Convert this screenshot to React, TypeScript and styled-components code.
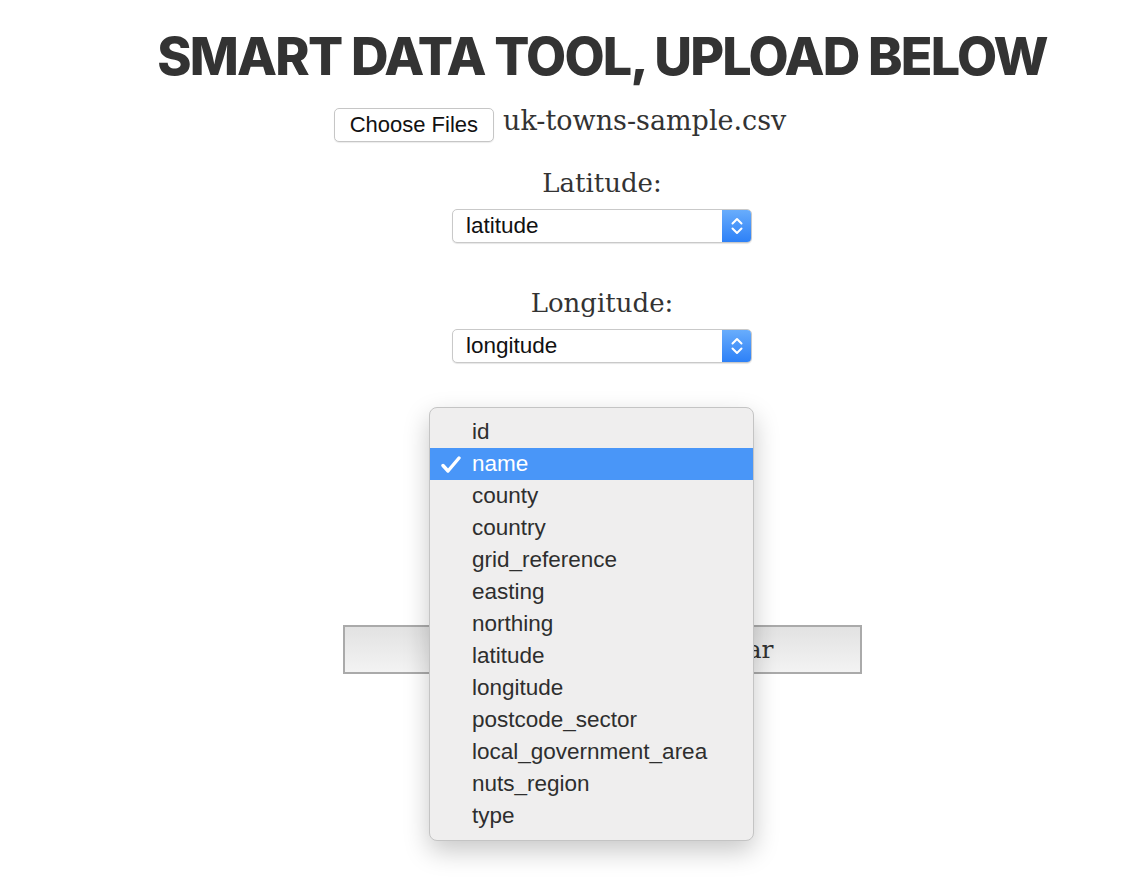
import React from 'react'
import styled, { createGlobalStyle } from 'styled-components'

const GlobalStyle = createGlobalStyle`
  html, body {
    margin: 0;
    padding: 0;
    background: #fff;
  }
  body {
    font-family: "DejaVu Serif", serif;
    color: #333;
  }
`

const Page = styled.main`
  display: flex;
  flex-direction: column;
  align-items: center;
  min-height: 882px;
  padding: 28px 0 120px 60px;
  box-sizing: border-box;
`

const Title = styled.h1`
  margin: 0;
  font-family: Inter, "Liberation Sans", sans-serif;
  font-weight: 800;
  font-size: 52px;
  line-height: 58px;
  letter-spacing: -1.8px;
  color: #333;
  white-space: nowrap;
`

const FileRow = styled.div`
  display: flex;
  align-items: center;
  gap: 9px;
  margin-top: 22px;
  margin-left: -84px;
`

const FileButton = styled.button`
  height: 34px;
  padding: 0 15px;
  background: #fff;
  border: 1px solid #c6c6c6;
  border-radius: 5px;
  box-shadow: 0 1px 1px rgba(0, 0, 0, 0.08);
  font-family: "Liberation Sans", Arial, sans-serif;
  font-size: 22px;
  color: #111;
`

const FileName = styled.span`
  font-size: 27px;
  margin-top: -10px;
  color: #333;
`

const Field = styled.div<{ $top: number }>`
  display: flex;
  flex-direction: column;
  align-items: center;
  margin-top: ${(p) => p.$top}px;
`

const Label = styled.label`
  font-size: 26px;
  line-height: 34px;
  color: #333;
  margin-bottom: 9px;
`

const SelectWrap = styled.div`
  position: relative;
`

const SelectBox = styled.div`
  width: 300px;
  height: 34px;
  box-sizing: border-box;
  display: flex;
  align-items: center;
  background: #fff;
  border: 1px solid #c9c9c9;
  border-radius: 5px;
  box-shadow: 0 1px 1px rgba(0, 0, 0, 0.1);
  font-family: "Liberation Sans", Arial, sans-serif;
  font-size: 22.5px;
  color: #111;
  overflow: hidden;
`

const SelectValue = styled.span`
  flex: 1;
  padding-left: 13px;
`

const Stepper = styled.span`
  width: 30px;
  height: 34px;
  display: flex;
  align-items: center;
  justify-content: center;
  background: linear-gradient(#6aaefc, #2b7ff7);
  margin-right: -1px;
`

const Menu = styled.ul`
  position: absolute;
  left: -23px;
  top: -42px;
  width: 325px;
  margin: 0;
  padding: 8px 0;
  list-style: none;
  box-sizing: border-box;
  background: #efeeee;
  border: 1px solid #c4c4c4;
  border-radius: 8px;
  box-shadow: 0 10px 26px rgba(0, 0, 0, 0.22);
  font-family: "Liberation Sans", Arial, sans-serif;
  font-size: 22.5px;
  z-index: 2;
`

const MenuItem = styled.li<{ $active?: boolean }>`
  position: relative;
  height: 32px;
  line-height: 32px;
  padding-left: 42px;
  color: ${(p) => (p.$active ? '#fff' : '#2e2e2e')};
  background: ${(p) => (p.$active ? '#4996f8' : 'transparent')};
`

const Check = styled.svg`
  position: absolute;
  left: 11px;
  top: 8px;
`

const Submit = styled.button`
  margin-top: 142px;
  width: 519px;
  height: 49px;
  background: linear-gradient(#e2e2e2, #f3f3f3);
  border: 2px solid #aaa;
  font-family: "DejaVu Serif", serif;
  font-size: 25px;
  color: #333;
`

const Chevrons = () => (
  <svg width="14" height="20" viewBox="0 0 14 20">
    <path d="M2.5 7.5 L7 3 L11.5 7.5 M2.5 12.5 L7 17 L11.5 12.5" fill="none" stroke="#fff" strokeWidth="2" strokeLinecap="round" strokeLinejoin="round" />
  </svg>
)

const columns = [
  'id', 'name', 'county', 'country', 'grid_reference', 'easting', 'northing',
  'latitude', 'longitude', 'postcode_sector', 'local_government_area', 'nuts_region', 'type',
]

function Select({ value, open }: { value: string; open?: boolean }) {
  return (
    <SelectWrap>
      <SelectBox>
        <SelectValue>{value}</SelectValue>
        <Stepper><Chevrons /></Stepper>
      </SelectBox>
      {open && (
        <Menu>
          {columns.map((c) => (
            <MenuItem key={c} $active={c === value}>
              {c === value && (
                <Check width="20" height="17" viewBox="0 0 20 17">
                  <path d="M2 9.5 L7 15 L18 2" fill="none" stroke="#fff" strokeWidth="3.4" strokeLinecap="round" strokeLinejoin="round" />
                </Check>
              )}
              {c}
            </MenuItem>
          ))}
        </Menu>
      )}
    </SelectWrap>
  )
}

export default function App() {
  return (
    <Page>
      <GlobalStyle />
      <Title>SMART DATA TOOL, UPLOAD BELOW</Title>
      <FileRow>
        <FileButton>Choose Files</FileButton>
        <FileName>uk-towns-sample.csv</FileName>
      </FileRow>
      <Field $top={24}>
        <Label>Latitude:</Label>
        <Select value="latitude" />
      </Field>
      <Field $top={43}>
        <Label>Longitude:</Label>
        <Select value="longitude" />
      </Field>
      <Field $top={43}>
        <Label>Name:</Label>
        <Select value="name" open />
      </Field>
      <Submit>Import Data to the Sidebar</Submit>
    </Page>
  )
}
